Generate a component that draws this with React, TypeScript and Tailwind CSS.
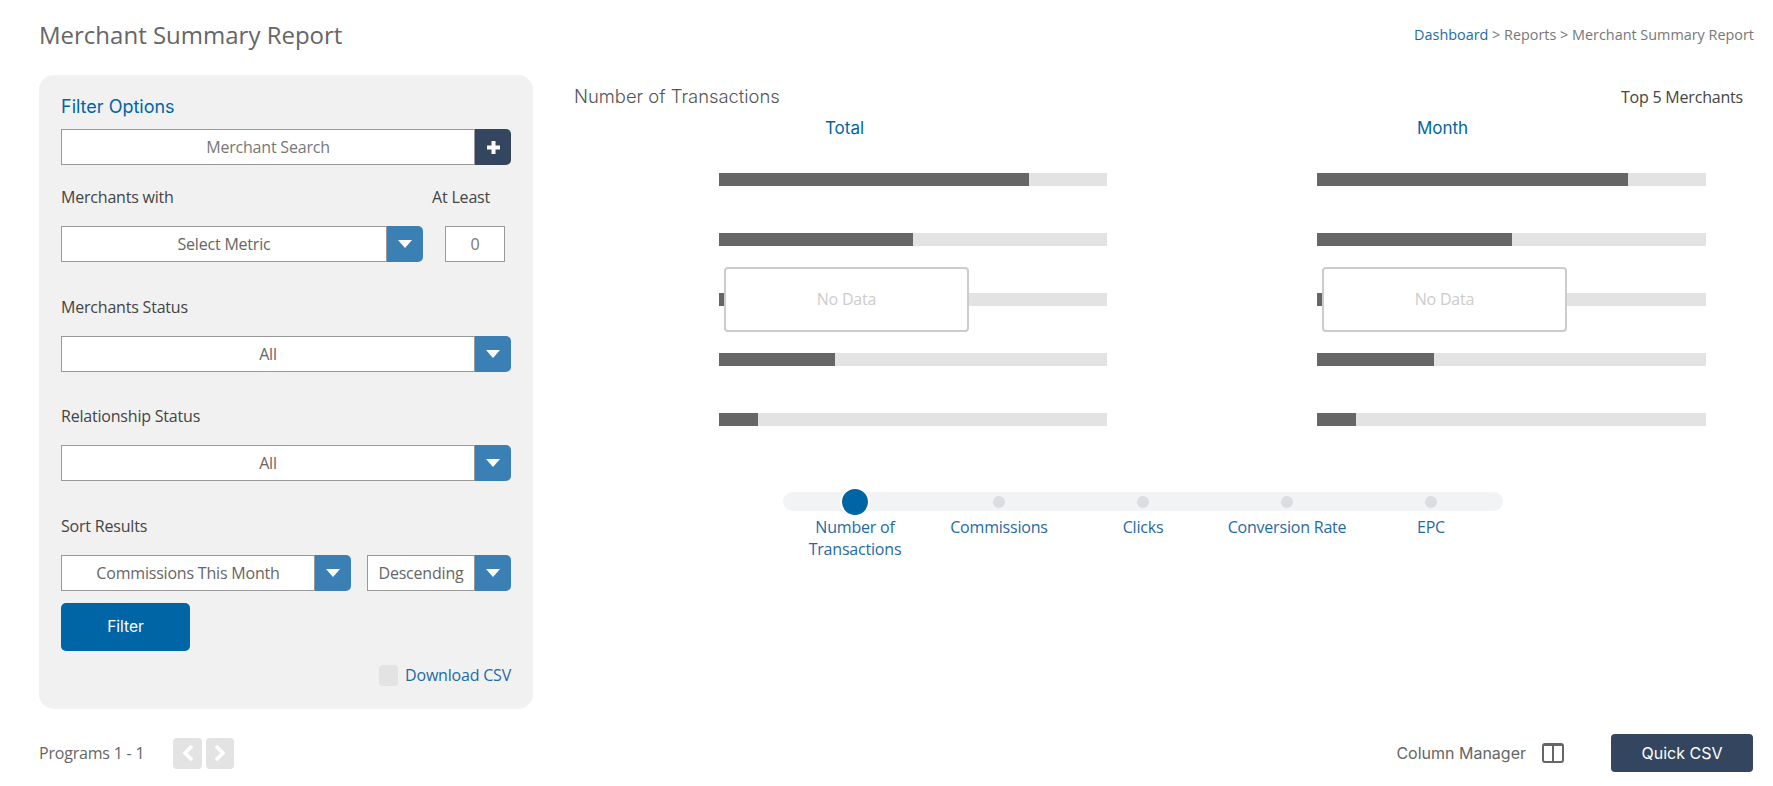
import React from "react";

const Caret = () => (
  <svg width="14" height="8" viewBox="0 0 14 8" aria-hidden="true">
    <path d="M0 0h14L7 8z" fill="#fff" />
  </svg>
);

const Select = ({ label, className }: { label: string; className?: string }) => (
  <div className={`flex h-[36px] ${className ?? ""}`}>
    <div className="flex min-w-0 flex-1 items-center justify-center border border-[#999] bg-white pb-[1px] text-[16px] tracking-[-0.2px] text-[#666]">{label}</div>
    <div className="flex w-[36px] items-center justify-center rounded-r-[5px] bg-[#3a80b5]">
      <Caret />
    </div>
  </div>
);

const Chart = ({ title, barClass }: { title: string; barClass: string }) => {
  const values = [80, 50, 40, 30, 10];
  return (
    <div className="relative w-[544px]">
      <div className="h-[55px] pr-[3px] text-center font-['Inter',sans-serif] text-[17px] leading-[20px] text-[#0065a4]">{title}</div>
      <div className="flex flex-col gap-[47px] pl-[145px]">
        {values.map((v) => (
          <div key={v} className={`h-[13px] bg-[#e3e3e3] ${barClass}`}>
            <div className="h-full bg-[#666]" style={{ width: `${v}%` }} />
          </div>
        ))}
      </div>
      {/* No data overlay */}
      <div className="absolute left-[150px] top-[149px] flex h-[65px] w-[245px] items-center justify-center rounded-[4px] border-2 border-[#ccc] bg-white pb-[2px] text-[16px] tracking-[-0.2px] text-[#ccc]">
        No Data
      </div>
    </div>
  );
};

const steps = ["Number of Transactions", "Commissions", "Clicks", "Conversion Rate", "EPC"];

export default function App() {
  return (
    <div className="h-[786px] w-[1773px] overflow-hidden bg-white font-['Open_Sans',sans-serif]">
      {/* Header */}
      <div className="flex h-[75px] items-start justify-between pl-[39px] pr-[19px]">
        <h1 className="mt-[18px] text-[24px] leading-[34px] text-[#666]">Merchant Summary Report</h1>
        <div className="mt-[24px] text-[14.4px] leading-[22px] text-[#777]">
          <span className="text-[#1f6aa5]">Dashboard</span> &gt; Reports &gt; Merchant Summary Report
        </div>
      </div>

      <div className="flex h-[634px] pl-[39px]">
        {/* Filter panel */}
        <div className="flex w-[494px] flex-col rounded-[15px] bg-[#f1f1f1] px-[22px] pt-[21px]">
          <div className="font-['Inter',sans-serif] text-[18px] leading-[22px] text-[#0065a4]">Filter Options</div>
          <div className="mt-[11px] flex h-[36px] w-[450px]">
            <div className="flex flex-1 items-center justify-center border border-[#999] bg-white pb-[1px] text-[16px] tracking-[-0.2px] text-[#777]">Merchant Search</div>
            <div className="flex w-[36px] items-center justify-center rounded-r-[5px] bg-[#34465f]">
              <svg width="13" height="13" viewBox="0 0 13 13" aria-hidden="true">
                <path d="M4.5 0h4v4.5H13v4H8.500V13h-4V8.500H0v-4h4.500z" fill="#fff" />
              </svg>
            </div>
          </div>
          <div className="mt-[21px] flex h-[22px] w-[444px] justify-between pr-[15px] text-[16px] leading-[22px] tracking-[-0.2px] text-[#444]">
            <span>Merchants with</span>
            <span>At Least</span>
          </div>
          <div className="mt-[18px] flex w-[450px] items-center">
            <Select label="Select Metric" className="w-[362px]" />
            <div className="ml-[22px] flex h-[36px] w-[60px] items-center justify-center border border-[#999] bg-white pb-[1px] text-[16px] text-[#777]">0</div>
          </div>
          <div className="mt-[34px] text-[16px] leading-[22px] tracking-[-0.2px] text-[#444]">Merchants Status</div>
          <Select label="All" className="mt-[18px] w-[450px]" />
          <div className="mt-[33px] text-[16px] leading-[22px] tracking-[-0.2px] text-[#444]">Relationship Status</div>
          <Select label="All" className="mt-[18px] w-[450px]" />
          <div className="mt-[34px] text-[16px] leading-[22px] tracking-[-0.2px] text-[#444]">Sort Results</div>
          <div className="mt-[18px] flex w-[450px] gap-[16px]">
            <Select label="Commissions This Month" className="w-[290px]" />
            <Select label="Descending" className="w-[144px]" />
          </div>
          <button className="mt-[12px] h-[48px] w-[129px] rounded-[5px] bg-[#0065a4] font-['Inter',sans-serif] text-[15.5px] text-white">Filter</button>
          <div className="mt-[14px] flex w-[450px] items-center justify-end gap-[7px]">
            <span className="h-[21px] w-[19px] rounded-[4px] bg-[#e3e3e3]" />
            <span className="text-[16px] leading-[21px] tracking-[-0.2px] text-[#1f6aa5]">Download CSV</span>
          </div>
        </div>

        {/* Charts area */}
        <div className="flex flex-1 flex-col pl-[41px]">
          <div className="flex h-[43px] items-center justify-between pr-[30px] pt-[1px]">
            <span className="font-['Inter',sans-serif] text-[18.4px] font-light text-[#555]">Number of Transactions</span>
            <span className="text-[16px] tracking-[-0.2px] text-[#444]">Top 5 Merchants</span>
          </div>
          <div className="flex gap-[54px]">
            <Chart title="Total" barClass="w-[388px]" />
            <Chart title="Month" barClass="w-[389px]" />
          </div>
          {/* Metric slider */}
          <div className="relative ml-[209px] mt-[66px] w-[720px]">
            <div className="absolute inset-x-0 top-0 h-[19px] rounded-full bg-[#f2f3f5]" />
            <div className="relative grid grid-cols-5">
              {steps.map((s, i) => (
                <div key={s} className="flex flex-col items-center">
                  <div className="flex h-[19px] items-center justify-center">
                    {i === 0 ? (
                      <span className="h-[30px] w-[30px] rounded-full border-[2px] border-white bg-[#0065a4]" />
                    ) : (
                      <span className="h-[12px] w-[12px] rounded-full bg-[#dcdde0]" />
                    )}
                  </div>
                  <div className="mt-[5px] w-[130px] text-center text-[16px] leading-[22px] tracking-[-0.2px] text-[#1f6aa5]">{s}</div>
                </div>
              ))}
            </div>
          </div>
        </div>
      </div>

      {/* Footer */}
      <div className="flex items-center justify-between pl-[39px] pr-[20px] pt-[25px]">
        <div className="flex items-center">
          <span className="text-[16px] tracking-[-0.2px] text-[#666]">Programs 1 - 1</span>
          <div className="ml-[29px] flex gap-[4px]">
            <div className="flex h-[31px] w-[29px] items-center justify-center rounded-[4px] bg-[#e3e3e3]">
              <svg width="12" height="18" viewBox="0 0 12 18" fill="none" stroke="#fff" strokeWidth="3.5" aria-hidden="true"><path d="M10 2 3 9l7 7" /></svg>
            </div>
            <div className="flex h-[31px] w-[28px] items-center justify-center rounded-[4px] bg-[#e3e3e3]">
              <svg width="12" height="18" viewBox="0 0 12 18" fill="none" stroke="#fff" strokeWidth="3.5" aria-hidden="true"><path d="m2 2 7 7-7 7" /></svg>
            </div>
          </div>
        </div>
        <div className="flex items-center">
          <span className="font-['Inter',sans-serif] text-[16px] text-[#666]">Column Manager</span>
          <svg className="ml-[16px]" width="22" height="20" viewBox="0 0 22 20" fill="none" stroke="#666" strokeWidth="2" aria-hidden="true">
            <rect x="1" y="1" width="20" height="18" rx="2" />
            <path d="M11 1v18" />
            <path d="M1 2h20" />
          </svg>
          <button className="ml-[47px] h-[38px] w-[142px] rounded-[4px] bg-[#34465f] font-['Inter',sans-serif] text-[16px] text-white">Quick CSV</button>
        </div>
      </div>
    </div>
  );
}
